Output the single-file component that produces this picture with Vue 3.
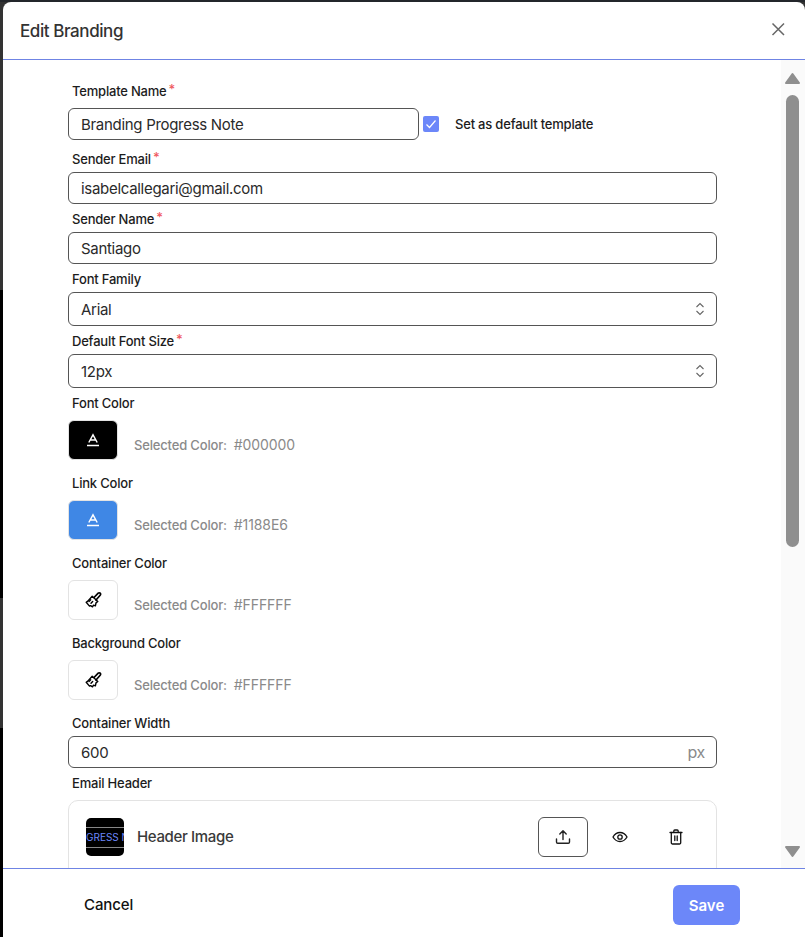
<script setup>
const colors = [
  { label: 'Font Color', value: '#000000', bg: '#000000', icon: 'a' },
  { label: 'Link Color', value: '#1188E6', bg: '#3f87e5', icon: 'a' },
  { label: 'Container Color', value: '#FFFFFF', bg: '#ffffff', icon: 'brush' },
  { label: 'Background Color', value: '#FFFFFF', bg: '#ffffff', icon: 'brush' }
]
</script>

<template>
  <div class="page">
    <div class="modal">
      <header class="head">
        <h1 class="title">Edit Branding</h1>
        <svg class="close" width="16" height="16" viewBox="0 0 16 16" fill="none" stroke="#666" stroke-width="1.5">
          <path d="M2.500 2.500l11.500 11.500M14 2.500L2.500 14" />
        </svg>
      </header>

      <div class="body">
        <div class="content">
          <div class="label tall">Template Name<span class="req">*</span></div>
          <div class="name-row">
            <input class="input name" value="Branding Progress Note" readonly />
            <span class="check">
              <svg width="12" height="12" viewBox="0 0 12 12" fill="none" stroke="#fff" stroke-width="1.2">
                <path d="M1.500 6.500l3 3 6-7" />
              </svg>
            </span>
            <span class="check-label">Set as default template</span>
          </div>

          <div class="label gap">Sender Email<span class="req">*</span></div>
          <input class="input" value="isabelcallegari@gmail.com" readonly />

          <div class="label">Sender Name<span class="req">*</span></div>
          <input class="input" value="Santiago" readonly />

          <div class="label">Font Family</div>
          <div class="input select">
            <span>Arial</span>
            <svg width="10" height="16" viewBox="0 0 10 16" fill="none" stroke="#666" stroke-width="1.1">
              <path d="M1.500 6L5 2.500 8.500 6M1.500 10L5 13.500 8.500 10" />
            </svg>
          </div>

          <div class="label">Default Font Size<span class="req">*</span></div>
          <div class="input select">
            <span>12px</span>
            <svg width="10" height="16" viewBox="0 0 10 16" fill="none" stroke="#666" stroke-width="1.1">
              <path d="M1.500 6L5 2.500 8.500 6M1.500 10L5 13.500 8.500 10" />
            </svg>
          </div>

          <div v-for="c in colors" :key="c.label" class="color">
            <div class="label tall">{{ c.label }}</div>
            <div class="color-row">
              <div class="swatch" :style="{ background: c.bg }">
                <svg v-if="c.icon === 'a'" width="16" height="16" viewBox="0 0 16 16" fill="none" stroke="#fff" stroke-width="1.4">
                  <path d="M3.800 10.500L8 2.800l4.200 7.700M5.400 8h5.200" />
                  <path d="M2 13.500h12" stroke-width="1.500" />
                </svg>
                <svg v-else width="17" height="18" viewBox="0 0 17 18" fill="none" stroke="#000" stroke-width="1.400" stroke-linejoin="round" stroke-linecap="round">
                  <path d="M9 6.500l4.200-4.300a1.400 1.400 0 0 1 2 2L11 9" stroke-width="1.700" />
                  <path d="M7.200 5.200l5.600 5.300-1.800 1.400-.6 3-1.900-.8-1 1.700-1.900-1.200-1.100.5-3.300-3.800 1.600-1.200z" />
                  <path d="M6 12.300l1.700-1.800M4 10.500l1.700-1.800" />
                </svg>
              </div>
              <span class="sel">Selected Color:</span>
              <span class="sel-val">{{ c.value }}</span>
            </div>
          </div>

          <div class="label">Container Width</div>
          <div class="input select plain">
            <span>600</span>
            <span class="unit">px</span>
          </div>

          <div class="label tall">Email Header</div>
          <div class="card">
            <div class="thumb"><span>GRESS N</span></div>
            <span class="card-title">Header Image</span>
            <div class="upload">
              <svg width="16" height="16" viewBox="0 0 16 16" fill="none" stroke="#222" stroke-width="1.400" stroke-linecap="round" stroke-linejoin="round">
                <path d="M8 10.500V1.800M4.800 5L8 1.800 11.200 5" />
                <path d="M1.500 10v3a1.200 1.200 0 0 0 1.200 1.200h10.600a1.200 1.200 0 0 0 1.200-1.200v-3" />
              </svg>
            </div>
            <div class="tool first">
              <svg width="16" height="12" viewBox="0 0 16 12" fill="none" stroke="#111" stroke-width="1.300">
                <path d="M1 6c1.700-3 4-4.500 7-4.500s5.300 1.500 7 4.500c-1.700 3-4 4.500-7 4.500S2.700 9 1 6z" />
                <circle cx="8" cy="6" r="2.200" />
              </svg>
            </div>
            <div class="tool">
              <svg width="14" height="16" viewBox="0 0 14 16" fill="none" stroke="#111" stroke-width="1.300" stroke-linecap="round">
                <path d="M1 3.500h12M4.800 3.300V2a1 1 0 0 1 1-1h2.400a1 1 0 0 1 1 1v1.300" />
                <path d="M2.300 3.500v10.300a1.200 1.200 0 0 0 1.200 1.200h7a1.200 1.200 0 0 0 1.200-1.200V3.500" />
                <path d="M5.800 7v4.500M8.200 7v4.500" />
              </svg>
            </div>
          </div>
        </div>

        <div class="scrollbar">
          <svg class="arrow" width="17" height="13" viewBox="0 0 17 13" fill="#8f8f8f" stroke="#8f8f8f" stroke-width="2" stroke-linejoin="round">
            <path d="M8.500 2L2 11h13z" />
          </svg>
          <span class="thumb-bar"></span>
          <svg class="arrow down" width="17" height="13" viewBox="0 0 17 13" fill="#8f8f8f" stroke="#8f8f8f" stroke-width="2" stroke-linejoin="round">
            <path d="M8.500 11L2 2h13z" />
          </svg>
        </div>
      </div>

      <footer class="foot">
        <span class="cancel">Cancel</span>
        <span class="save">Save</span>
      </footer>
    </div>
  </div>
</template>

<style>
html, body { margin: 0; background: #23262b; }
</style>

<style scoped>
.page {
  width: 805px;
  height: 937px;
  box-sizing: border-box;
  padding: 2px 0 0 3px;
  overflow: hidden;
  background: linear-gradient(#333333 0 290px, #000000 290px 598px, #333333 598px 728px, #000000 728px);
  font-family: Inter, "Liberation Sans", sans-serif;
  color: #1a1a1a;
  position: relative;
}
.page::before {
  content: "";
  position: absolute;
  left: 0;
  right: 0;
  top: 0;
  height: 2px;
  background: #23262b;
}
.modal {
  height: 935px;
  background: #fff;
  border-radius: 8px 8px 0 0;
  display: flex;
  flex-direction: column;
  overflow: hidden;
  position: relative;
}
.head {
  flex: none;
  display: flex;
  align-items: center;
  justify-content: space-between;
  padding: 0 19px 0 17px;
  box-sizing: border-box;
  border-bottom: 1px solid #6f84e4;
  height: 58px;
}
.title {
  margin: 0;
  font-size: 17px;
  font-weight: 500;
  letter-spacing: -0.42px;
  color: #333;
}
.close { margin-top: -4px; }
.body {
  flex: 1;
  min-height: 0;
  display: flex;
  overflow: hidden;
}
.content {
  flex: 1;
  min-width: 0;
  padding: 16px 64px 0 65px;
  overflow: hidden;
}
.label {
  height: 28px;
  box-sizing: border-box;
  padding: 7px 0 0 4px;
  font-size: 13px;
  line-height: 16px;
  font-weight: 500;
  letter-spacing: -0.2px;
  color: #1c1c1c;
}
.label.gap { margin-top: 4px; }
.label.tall { height: 32px; }
.req {
  color: #ef5a5f;
  margin-left: 2px;
  position: relative;
  top: -2px;
}
.input {
  display: block;
  width: 100%;
  height: 32px;
  box-sizing: border-box;
  border: 1px solid #555;
  border-radius: 6px;
  padding: 0 12px;
  font: inherit;
  font-size: 15px;
  color: #2a2a2a;
  letter-spacing: -0.3px;
  background: #fff;
  outline: none;
}
.select {
  height: 34px;
  display: flex;
  align-items: center;
  justify-content: space-between;
}
.select svg { margin-right: -1px; }
.select.plain { height: 32px; }
.name-row {
  display: flex;
  align-items: center;
  height: 32px;
}
.name { width: 351px; flex: none; }
.check {
  width: 16px;
  height: 16px;
  margin-left: 4px;
  flex: none;
  background: #6c87f9;
  border-radius: 2px;
  display: flex;
  align-items: center;
  justify-content: center;
}
.check-label {
  margin-left: 16px;
  margin-top: -1px;
  font-size: 13px;
  font-weight: 500;
  letter-spacing: -0.2px;
  color: #1c1c1c;
}
.color { margin-bottom: 8px; }
.color-row {
  display: flex;
  align-items: flex-end;
  height: 40px;
}
.swatch {
  width: 50px;
  height: 40px;
  box-sizing: border-box;
  border: 1px solid #e3e3e3;
  border-radius: 6px;
  display: flex;
  align-items: center;
  justify-content: center;
  flex: none;
}
.sel {
  margin-left: 16px;
  font-size: 13px;
  font-weight: 500;
  letter-spacing: -0.17px;
  color: #8a8a8a;
  line-height: 16px;
  margin-bottom: 7px;
}
.sel-val {
  margin-left: 7px;
  font-size: 14px;
  letter-spacing: -0.1px;
  color: #8a8a8a;
  line-height: 16px;
  margin-bottom: 7px;
}
.unit { color: #8a8a8a; font-size: 16px; margin-right: -1px; }
.card {
  height: 90px;
  box-sizing: border-box;
  border: 1px solid #e3e3e3;
  border-radius: 10px;
  padding: 16px 12px 16px 17px;
  display: flex;
  align-items: flex-start;
}
.thumb {
  width: 38px;
  height: 38px;
  margin-top: 1px;
  flex: none;
  border-radius: 5px;
  background: #000;
  overflow: hidden;
  position: relative;
  display: flex;
  align-items: center;
  justify-content: flex-start;
}
.thumb::before {
  content: "";
  position: absolute;
  left: 0;
  right: 0;
  top: 9px;
  height: 19px;
  border-top: 1px solid #888;
  border-bottom: 1px solid #888;
}
.thumb span {
  font-size: 10px;
  color: #6c87f9;
  white-space: nowrap;
}
.card-title {
  margin-left: 13px;
  margin-top: 1px;
  line-height: 38px;
  font-size: 15px;
  font-weight: 500;
  color: #3a3a3a;
  letter-spacing: -0.35px;
  flex: 1;
}
.upload {
  width: 50px;
  height: 40px;
  box-sizing: border-box;
  border: 1px solid #555;
  border-radius: 6px;
  display: flex;
  align-items: center;
  justify-content: center;
}
.tool {
  width: 56px;
  height: 40px;
  display: flex;
  align-items: center;
  justify-content: center;
}
.tool.first { margin-left: 4px; }
.scrollbar {
  width: 24px;
  flex: none;
  background: #fafafa;
  display: flex;
  flex-direction: column;
  align-items: center;
  padding: 12px 1px 0 0;
  box-sizing: border-box;
}
.arrow { flex: none; }
.arrow.down { margin-top: 298px; }
.thumb-bar {
  width: 13px;
  height: 452px;
  margin-top: 10px;
  flex: none;
  border-radius: 7px;
  background: #8f8f8f;
}
.foot {
  flex: none;
  height: 69px;
  box-sizing: border-box;
  border-top: 1px solid #6f84e4;
  display: flex;
  align-items: center;
  justify-content: space-between;
  padding: 2px 65px 0 81px;
}
.cancel {
  font-size: 15px;
  font-weight: 500;
  letter-spacing: -0.1px;
  color: #111;
}
.save {
  width: 67px;
  height: 40px;
  margin-top: 2px;
  border-radius: 6px;
  background: #6c87f9;
  color: #fff;
  font-size: 15px;
  font-weight: 600;
  display: flex;
  align-items: center;
  justify-content: center;
}
</style>
